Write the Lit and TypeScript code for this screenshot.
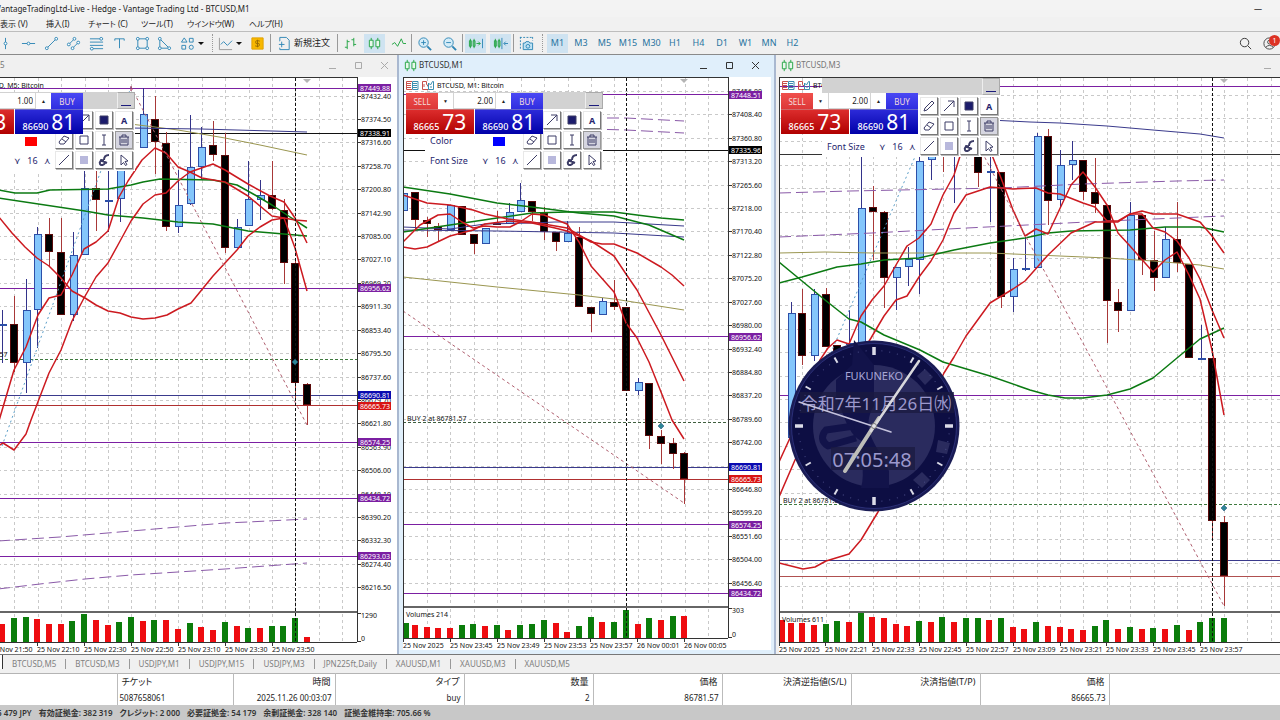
import { LitElement, html, css, svg, nothing } from "lit";
import { customElement, property } from "lit/decorators.js";

type Candle = [number, number, number, number, number, string];
type Line = { c: string; w?: number; d?: string; p: string };
type Tag = { y: number; t: string; c: string };
interface ChartData {
  ox: number;
  x0: number;
  x1: number;
  sep: number;
  base: number;
  gridX: number;
  gridY: number;
  rows: number;
  step?: number;
  first?: number;
  day: number;
  last: number;
  levels: [number, string, string?][];
  candles: Candle[];
  lines: Line[];
  vols: [number, number, string][];
  tags: Tag[];
  dates: [number, string][];
  scale?: [string, string];
  title: string;
  titleX: number;
  buy: [number, number, string];
  volumes?: string;
  mark: [number, number];
}

const RED = "#cc1a20";
const GREEN = "#0b7a12";
const PURPLE = "#7b1fa2";
const LILAC = "#8a5aa8";
const NAVY = "#3a3a8c";
const OLIVE = "#9a9650";

const M5: ChartData = {
  ox: 0, x0: -20, x1: 357, sep: 611, base: 642, gridX: 14.3, gridY: 95.5, rows: 22, step: 57.9, first: 87432.4,
  day: 295, last: 307,
  levels: [[88, PURPLE], [133, "#111"], [288, PURPLE], [359, "#3f7a3f", "3 2"], [395, NAVY], [405, "#b03030"], [442, PURPLE], [498, PURPLE], [556, PURPLE]],
  candles: [
    [2, 324, 325, 310, 363, "b"], [14, 324, 363, 296, 372, "k"], [26, 310, 363, 279, 393, "b"], [37, 234, 310, 227, 348, "b"],
    [49, 234, 252, 218, 266, "k"], [61, 252, 315, 218, 315, "k"], [73, 255, 315, 232, 321, "b"], [84, 188, 255, 160, 255, "b"],
    [96, 188, 200, 160, 231, "k"], [108, 200, 201, 165, 232, "b"], [120, 165, 199, 160, 222, "b"], [143, 114, 148, 88, 148, "b"],
    [155, 119, 142, 96, 174, "k"], [166, 143, 227, 132, 231, "k"], [178, 205, 227, 170, 233, "b"], [190, 167, 204, 115, 205, "b"],
    [201, 147, 167, 127, 180, "b"], [213, 145, 155, 121, 161, "k"], [225, 155, 248, 133, 253, "k"], [237, 227, 248, 219, 248, "b"],
    [248, 199, 226, 161, 226, "b"], [260, 195, 200, 180, 220, "b"], [272, 195, 209, 161, 210, "k"], [284, 210, 263, 199, 284, "k"],
    [295, 263, 383, 261, 399, "k"], [307, 384, 405, 383, 425, "k"],
  ],
  lines: [
    { c: OLIVE, w: 1, p: "130,124 155,127 178,130 225,138 260,145 307,155" },
    { c: NAVY, w: 1, p: "130,128 201,129 307,132" },
    { c: GREEN, p: "-2,190 15,193 37,193 50,190 108,189 131,185 143,182 160,179 213,180 237,185 255,195 272,205 287,215 307,228" },
    { c: GREEN, p: "-2,198 85,211 108,215 143,218 178,222 213,224 248,231 272,233 307,236" },
    { c: RED, p: "-2,216 12,233 25,247 37,258 49,266 60,277 72,291 85,298 96,305 108,311 120,313 131,317 143,319 155,318 167,315 178,309 191,303 213,276 225,263 237,250 248,236 260,227 272,220 284,218 295,220 307,221" },
    { c: RED, p: "-2,424 14,370 26,347 38,315 49,298 61,295 72,275 84,249 96,242 108,231 119,197 128,181 142,160 155,148 166,153 178,167 190,172 202,178 225,182 248,196 272,216 284,218 295,248 307,291" },
    { c: RED, p: "-2,446 3,443 14,450 26,434 31,420 49,373 61,350 72,321 84,298 96,277 108,263 119,243 131,221 143,204 155,195 166,193 178,181 190,172 213,164 225,170 248,184 270,196 284,202 295,218 307,243" },
    { c: LILAC, w: 1, d: "12 5", p: "-2,541 60,537 143,530 225,523 248,522 307,519" },
    { c: LILAC, w: 1, d: "12 5", p: "-2,589 40,584 85,579 131,575 225,569 307,563" },
    { c: "#b06070", w: 1, d: "3 3", p: "131,87 307,425" },
    { c: "#5a9ec8", w: 1, d: "2 3", p: "2,446 131,87" },
    { c: "#a02050", w: 1, p: "131,86 131,91" },
  ],
  vols: [[2, 624, "r"], [14, 618, "g"], [26, 617, "g"], [37, 619, "r"], [49, 624, "r"], [61, 624, "r"], [72, 621, "g"], [84, 614, "g"], [96, 620, "r"], [108, 625, "r"], [119, 622, "g"], [131, 617, "g"], [143, 621, "r"], [154, 620, "g"], [166, 620, "r"], [178, 629, "r"], [190, 623, "g"], [201, 627, "r"], [213, 630, "r"], [225, 622, "g"], [237, 626, "r"], [248, 628, "g"], [260, 628, "r"], [272, 626, "g"], [283, 626, "g"], [295, 618, "g"], [307, 637, "r"]],
  tags: [{ y: 88, t: "87449.88", c: PURPLE }, { y: 133, t: "87338.91", c: "#000" }, { y: 288, t: "86956.62", c: PURPLE }, { y: 395, t: "86690.81", c: "#0a0ab0" }, { y: 406, t: "86665.73", c: "#d81414" }, { y: 442, t: "86574.25", c: PURPLE }, { y: 498, t: "86434.72", c: PURPLE }, { y: 556, t: "86293.03", c: PURPLE }],
  dates: [[-10, "25 Nov 21:50"], [37, "25 Nov 22:10"], [84, "25 Nov 22:30"], [131, "25 Nov 22:50"], [178, "25 Nov 23:10"], [225, "25 Nov 23:30"], [272, "25 Nov 23:50"]],
  scale: ["1290", "0"], title: "BTCUSD, M5: Bitcoin", titleX: -23, buy: [-52, 357, "BUY 2 at 86781.57"], mark: [295, 362],
};

const M1: ChartData = {
  ox: 403, x0: 403, x1: 728, sep: 606, base: 638, gridX: 427, gridY: 90.9, rows: 22, step: 47.6, first: 87456,
  day: 626, last: 684,
  levels: [[94, PURPLE], [150, "#111"], [336, PURPLE], [422, "#3f5f3f", "3 2"], [467, NAVY], [479, "#b03030"], [524, PURPLE], [593, PURPLE]],
  candles: [
    [403, 193, 211, 193, 211, "b"], [415, 192, 220, 192, 229, "k"], [427, 220, 224, 217, 237, "k"], [438, 226, 230, 223, 241, "k"],
    [450, 205, 230, 205, 230, "b"], [462, 206, 235, 206, 235, "k"], [474, 234, 244, 234, 254, "k"], [485, 228, 244, 228, 244, "b"],
    [497, 223, 225, 211, 225, "k"], [509, 212, 224, 203, 224, "b"], [520, 200, 212, 183, 212, "b"], [532, 201, 212, 201, 221, "k"],
    [544, 213, 232, 207, 240, "k"], [556, 232, 242, 232, 251, "k"], [567, 233, 242, 221, 242, "b"], [579, 237, 307, 227, 307, "k"],
    [591, 307, 314, 307, 332, "k"], [602, 301, 315, 298, 315, "b"], [614, 302, 307, 280, 310, "k"], [626, 307, 391, 307, 391, "k"],
    [638, 382, 391, 378, 395, "b"], [649, 383, 436, 383, 449, "k"], [661, 436, 444, 430, 464, "k"], [673, 443, 454, 438, 469, "k"],
    [684, 453, 479, 452, 504, "k"],
  ],
  lines: [
    { c: OLIVE, w: 1, p: "403,277 497,287 579,295 614,299 684,310" },
    { c: NAVY, w: 1, p: "403,227 450,229 485,224 532,223 555,222 614,222 684,226" },
    { c: NAVY, w: 1, p: "403,230 497,231 614,233 684,237" },
    { c: GREEN, p: "403,187 450,194 497,203 532,207 579,213 614,216 649,225 684,240" },
    { c: GREEN, p: "403,232 450,225 497,218 532,213 567,212 614,212 637,215 661,218 684,220" },
    { c: RED, p: "403,195 427,203 450,205 473,210 485,214 508,219 532,222 567,228 591,242 602,244 614,244 637,253 661,267 672,275 684,286" },
    { c: RED, p: "403,242 420,225 438,215 450,214 462,222 473,228 485,226 497,227 510,227 520,222 532,214 544,215 567,224 579,242 591,266 614,292 626,323 637,338 649,362 661,392 672,420 684,439" },
    { c: RED, p: "403,247 415,249 427,247 450,236 473,230 485,224 508,221 532,223 555,228 567,231 591,241 614,256 626,274 637,290 661,335 684,381" },
    { c: LILAC, w: 1, d: "12 5", p: "590,118 626,118 684,121" },
    { c: LILAC, w: 1, d: "12 5", p: "590,129 626,130 684,133" },
    { c: "#b06070", w: 1, d: "3 3", p: "403,311 684,503" },
  ],
  vols: [[403, 623, "g"], [415, 625, "r"], [427, 627, "r"], [438, 628, "r"], [450, 628, "r"], [462, 625, "g"], [473, 624, "g"], [485, 626, "r"], [497, 625, "g"], [508, 630, "r"], [520, 625, "g"], [532, 624, "g"], [544, 620, "g"], [556, 623, "r"], [567, 632, "r"], [579, 626, "g"], [591, 617, "g"], [602, 622, "r"], [614, 622, "g"], [626, 610, "g"], [638, 624, "r"], [649, 618, "g"], [661, 620, "r"], [673, 616, "g"], [684, 616, "r"]],
  tags: [{ y: 95, t: "87448.51", c: PURPLE }, { y: 150, t: "87335.96", c: "#000" }, { y: 337, t: "86956.62", c: PURPLE }, { y: 467, t: "86690.81", c: "#0a0ab0" }, { y: 479, t: "86665.73", c: "#d81414" }, { y: 525, t: "86574.25", c: PURPLE }, { y: 593, t: "86434.72", c: PURPLE }],
  dates: [[403, "25 Nov 2025"], [450, "25 Nov 23:45"], [497, "25 Nov 23:49"], [544, "25 Nov 23:53"], [590, "25 Nov 23:57"], [637, "26 Nov 00:01"], [684, "26 Nov 00:05"]],
  scale: ["303", "0"], title: "BTCUSD, M1: Bitcoin", titleX: 437, buy: [407, 421, "BUY 2 at 86781.57"], volumes: "Volumes 214", mark: [661, 426],
};

const M3: ChartData = {
  ox: 779, x0: 779, x1: 4000, sep: 611, base: 642, gridX: 802.3, gridY: 94.5, rows: 22,
  day: 1212, last: 1224,
  levels: [[86, PURPLE], [154, "#333"], [395, PURPLE], [504, "#3f7a3f", "3 2"], [560, NAVY], [576, "#b05050"]],
  candles: [
    [791, 313, 438, 302, 438, "b"], [802, 313, 356, 289, 365, "k"], [814, 294, 356, 289, 361, "b"], [826, 294, 347, 288, 347, "k"],
    [837, 345, 385, 345, 385, "k"], [849, 343, 344, 310, 360, "b"], [861, 208, 400, 150, 400, "b"], [873, 207, 212, 186, 260, "k"],
    [884, 212, 278, 211, 308, "k"], [896, 267, 278, 267, 310, "b"], [908, 259, 267, 247, 286, "b"], [919, 161, 260, 150, 294, "b"],
    [931, 156, 160, 150, 180, "b"], [943, 150, 151, 150, 172, "k"], [954, 150, 151, 150, 203, "b"], [978, 150, 173, 150, 187, "k"],
    [990, 171, 173, 150, 222, "b"], [1001, 172, 297, 172, 308, "k"], [1013, 269, 297, 258, 312, "b"], [1025, 268, 269, 237, 271, "b"],
    [1037, 136, 268, 133, 268, "b"], [1048, 136, 201, 129, 225, "k"], [1060, 165, 200, 150, 208, "b"], [1072, 160, 165, 141, 180, "b"],
    [1083, 160, 192, 160, 200, "k"], [1095, 192, 204, 158, 213, "k"], [1107, 205, 301, 205, 343, "k"], [1118, 302, 311, 289, 332, "k"],
    [1130, 215, 311, 202, 311, "b"], [1142, 215, 260, 215, 275, "k"], [1154, 260, 278, 231, 291, "k"], [1165, 239, 278, 227, 278, "b"],
    [1177, 239, 263, 202, 272, "k"], [1189, 264, 358, 264, 358, "k"], [1201, 358, 359, 325, 359, "b"], [1212, 358, 521, 358, 538, "k"],
    [1224, 522, 576, 516, 606, "k"],
  ],
  lines: [
    { c: NAVY, w: 1, p: "990,120 1030,122 1060,123 1107,126 1153,130 1200,134 1224,138" },
    { c: LILAC, w: 1, d: "12 5", p: "779,193 850,191 1000,188 1083,184 1177,181 1224,180" },
    { c: LILAC, w: 1, d: "12 5", p: "779,237 872,233 967,228 1107,221 1177,218 1224,216" },
    { c: OLIVE, w: 1, p: "779,253 825,252 872,253 990,253 1060,256 1107,258 1153,261 1200,265 1224,269" },
    { c: GREEN, p: "779,283 802,277 837,267 861,264 884,260 919,258 954,250 990,243 1025,238 1048,233 1071,231 1130,230 1165,227 1200,227 1224,232" },
    { c: GREEN, p: "779,262 802,281 825,300 849,319 861,322 884,335 920,350 943,362 990,376 1030,390 1048,395 1065,398 1083,398 1107,395 1130,389 1153,378 1177,358 1200,339 1224,328" },
    { c: RED, p: "779,462 790,438 820,360 828,348 837,340 849,344 861,316 872,300 884,286 896,265 907,246 919,238 931,224 943,195 954,175 962,150 978,130 990,150 1001,178 1013,210 1025,236 1036,229 1048,234 1071,185 1083,172 1095,187 1107,205 1118,233 1130,246 1153,272 1165,260 1177,252 1189,275 1200,299 1212,350 1224,415" },
    { c: RED, p: "779,497 795,460 871,338 884,316 896,300 907,296 919,277 931,261 943,240 954,213 966,195 990,187 1013,189 1036,188 1048,193 1060,194 1083,203 1095,207 1107,221 1118,221 1130,214 1142,214 1153,228 1165,232 1177,241 1189,258 1200,279 1212,310 1224,338" },
    { c: RED, p: "779,563 803,569 815,567 826,561 849,554 861,540 878,512 944,373 954,357 966,336 990,303 1013,289 1025,281 1048,255 1071,233 1095,222 1118,222 1130,214 1142,211 1153,214 1177,214 1200,222 1212,236 1224,253" },
    { c: "#5a9ec8", w: 1, d: "2 3", p: "815,390 917,152" },
    { c: "#b06070", w: 1, d: "3 3", p: "982,152 1025,235 1224,606" },
  ],
  vols: [[779, 620, "r"], [791, 623, "r"], [802, 623, "r"], [814, 625, "r"], [826, 624, "g"], [837, 621, "g"], [849, 622, "r"], [861, 613, "g"], [872, 617, "r"], [884, 618, "r"], [896, 624, "r"], [907, 626, "r"], [919, 621, "g"], [931, 622, "r"], [942, 617, "g"], [954, 622, "r"], [966, 618, "g"], [978, 618, "g"], [989, 620, "r"], [1001, 618, "g"], [1013, 627, "r"], [1024, 629, "r"], [1036, 622, "g"], [1048, 626, "r"], [1060, 627, "r"], [1071, 629, "r"], [1083, 630, "r"], [1095, 626, "g"], [1106, 620, "g"], [1118, 629, "r"], [1130, 627, "g"], [1142, 629, "r"], [1153, 628, "g"], [1165, 629, "r"], [1177, 625, "g"], [1189, 630, "r"], [1200, 622, "g"], [1212, 618, "g"], [1224, 618, "g"]],
  tags: [],
  dates: [[779, "25 Nov 2025"], [825, "25 Nov 22:21"], [872, "25 Nov 22:33"], [919, "25 Nov 22:45"], [966, "25 Nov 22:57"], [1013, "25 Nov 23:09"], [1060, "25 Nov 23:21"], [1106, "25 Nov 23:33"], [1153, "25 Nov 23:45"], [1200, "25 Nov 23:57"]],
  title: "BTCUSD, M3: Bitcoin", titleX: 813, buy: [783, 503, "BUY 2 at 86781.57"], volumes: "Volumes 611", mark: [1224, 508],
};

const TOP = 77;

@customElement("price-chart")
class PriceChart extends LitElement {
  @property({ attribute: false }) data!: ChartData;

  static styles = css`
    :host { display: block; height: 100%; min-width: 0; background: #fff; overflow: hidden; }
    svg { display: block; width: 100%; height: 100%; }
    text { font: 7px "Noto Sans", sans-serif; fill: #111; }
    .tag { fill: #fff; }
    .crisp { shape-rendering: crispEdges; }
    .grid { stroke: #c9c9c9; stroke-dasharray: 3 3; }
    .frame { stroke: #333; }
    .curve { fill: none; stroke-linejoin: round; }
  `;

  private book(x: number) {
    return svg`<g transform="translate(${x} 81)" fill="none" stroke-width="1">
      <path d="M6 .5H.5v8H6M1 2.500h4M1 4.500h4M1 6.500h4" stroke="#c8524c"/><path d="M6.500 .5H12v8H6.500zM7 2.500h4M7 4.500h4M7 6.500h4" stroke="#3a8fb0"/>
      <path d="M16.500 .5h4v3l2 2v3h-6zM18 3v3" stroke="#c8524c"/><path d="M22.500 2l2 2 2-3.500h1v8h-5zM25 5v2" stroke="#3a8fb0"/></g>`;
  }

  render() {
    const d = this.data;
    const cols: number[] = [];
    for (let x = d.gridX; x < Math.min(d.x1, 2600); x += 23.43) cols.push(Math.round(x) + 0.5);
    const rows = Array.from({ length: d.rows }, (_, i) => Math.round(d.gridY + i * 23.42) + 0.5);
    return html`<svg role="img" aria-label=${d.title}>
      <g transform="translate(${-d.ox} ${-TOP})">
        <g class="crisp grid">
          ${cols.map((x) => svg`<path d="M${x} 78V${d.sep}M${x} ${d.sep + 3}V${d.base}"/>`)}
          ${rows.map((y) => svg`<path d="M${d.x0} ${y}H${d.x1}"/>`)}
        </g>
        <g class="crisp">
          ${d.levels.map(([y, c, dash]) => svg`<path d="M${d.x0} ${y + 0.5}H${d.x1}" stroke=${c} stroke-dasharray=${dash ?? nothing}/>`)}
          ${d.candles.map(([x, t, b, h, l, k]) => svg`
            <path d="M${x + 0.5} ${h}V${l}" stroke=${k === "b" ? "#33338a" : "#a83838"}/>
            <rect x=${x - 3.5 + (k === "b" ? 0.5 : 0)} y=${t + 0.5} width="7" height=${Math.max(b - t - 1, 0.5)}
              fill=${k === "b" ? "#84c6fb" : "#000"} stroke=${k === "b" ? "#2c4fa8" : "#5a0a0a"}/>`)}
          ${d.vols.map(([x, y, k]) => svg`<rect x=${Math.max(x - 3, d.x0)} y=${y} width="6" height=${d.base - y} fill=${k === "g" ? "#0b7d0b" : "#ee0c10"}/>`)}
        </g>
        ${d.lines.map((l) => svg`<polyline class="curve" points=${l.p} stroke=${l.c} stroke-width=${l.w ?? 1.5} stroke-dasharray=${l.d ?? nothing}/>`)}
        <path d="M${d.day + 0.5} 78V${d.base}" class="crisp" stroke="#111" stroke-dasharray="3 2"/>
        <path d="M${d.last - 4} 79h8l-4 4z" fill="#b4b4b4"/>
        <path d="M${d.mark[0]} ${d.mark[1] - 3}l3 3-3 3-3-3z" fill="#2e8696" stroke="#1e4a78" stroke-width=".5"/>
        <g class="crisp frame">
          <path d="M${d.x0} 77.500H${d.x1}M${d.x0} ${d.base + 0.5}H${d.x1}"/>
          <path d="M${d.x0} ${d.sep + 1}H${d.x1}" stroke="#666" stroke-width="2"/>
          <path d="M${d.x0 + 0.5} 77V${d.base}M${d.x1 + 0.5} 77V${d.base}"/>
          ${d.dates.map(([x]) => svg`<path d="M${x + 0.5} ${d.base}v4"/>`)}
          ${d.scale ? svg`<path d="M${d.x1} ${d.sep + 2.500}h4M${d.x1} ${d.base - 0.5}h4"/>` : nothing}
        </g>
        ${d.first ? rows.map((y, i) => svg`<path class="crisp frame" d="M${d.x1} ${y}h4"/><text x=${d.x1 + 4} y=${y + 2.500}>${(d.first! - i * d.step!).toFixed(2)}</text>`) : nothing}
        ${d.tags.map((t) => svg`<rect x=${d.x1 + 1} y=${t.y - 4} width="33" height="8" fill=${t.c}/><text class="tag" x=${d.x1 + 3} y=${t.y + 2.500}>${t.t}</text>`)}
        ${d.scale ? svg`<text x=${d.x1 + 4} y=${d.sep + 7}>${d.scale[0]}</text><text x=${d.x1 + 4} y=${d.base - 1}>${d.scale[1]}</text>` : nothing}
        ${d.dates.map(([x, t]) => svg`<text x=${x} y=${d.base + 10}>${t}</text>`)}
        <text x=${d.buy[0]} y=${d.buy[1]}>${d.buy[2]}</text>
        <text x=${d.titleX} y="88">${d.title}</text>
        ${d.ox ? this.book(d.titleX - 31) : nothing}
        ${d.volumes ? svg`<text x=${d.x0 + 3} y=${d.sep + 11}>${d.volumes}</text>` : nothing}
      </g>
    </svg>`;
  }
}

@customElement("trade-panel")
class TradePanel extends LitElement {
  @property() volume = "2.00";

  static styles = css`
    :host { display: grid; grid-template-columns: 68px 68px; gap: 0 1px; width: 137px; background: #fff; font: 9px "Noto Sans", sans-serif; }
    button { border: 0; margin: 0; padding: 0; color: #fff; font: inherit; }
    .top { grid-column: 1 / 3; display: flex; height: 16px; min-width: 0; }
    .side { flex: none; width: 32px; font-size: 8px; color: #f4dcdc; }
    .sell { background: linear-gradient(#f0504c, #dd3838); }
    .buy { background: linear-gradient(#4a48f4, #302ee0); }
    .spin { display: flex; flex: 1; min-width: 0; align-items: stretch; }
    .spin button { flex: none; width: 15px; background: #fff; color: #222; font-size: 5px; }
    input { flex: 1; width: 0; min-width: 0; margin: 0; border: 1px solid #d4d4d4; border-width: 0 1px 1px; padding: 0 2px; font: inherit; font-size: 8px; text-align: right; color: #222; background: #fff; }
    .quote { display: flex; align-items: baseline; justify-content: center; gap: 3px; height: 25px; line-height: 25px; font-size: 9px; font-weight: 500; border-top: 1px solid #ffffff66; }
    .quote b { font-size: 21px; font-weight: 400; }
    .sq { background: linear-gradient(#dc2c2c, #b00000); }
    .bq { background: linear-gradient(#2c2ad8, #0000a8); }
  `;

  render() {
    return html`
      <div class="top">
        <button class="side sell">SELL</button>
        <div class="spin"><button aria-label="Decrease volume">▼</button><input aria-label="Volume" .value=${this.volume} /><button aria-label="Increase volume">▲</button></div>
        <button class="side buy">BUY</button>
      </div>
      <button class="quote sq">86665<b>73</b></button>
      <button class="quote bq">86690<b>81</b></button>`;
  }
}

const TOOLS: [string, string][] = [
  ["Pencil", `<path d="M2 12l1-3 7-7 2 2-7 7z"/>`],
  ["Arrow", `<path d="M2 12L12 2M6 2h6v6"/>`],
  ["Filled box", `<path d="M3 3h8v8H3z" fill="#1c1c6c"/>`],
  ["Text", ""],
  ["Eraser", `<path d="M2 9l5-6 5 2-5 6H3z M5 6l4 3"/>`],
  ["Rectangle", `<path d="M3 3h8v8H3z"/>`],
  ["Vertical line", `<path d="M5 2h4M7 2v10M5 12h4"/>`],
  ["Delete", `<path d="M2 4h10M5 4V2h4v2M3 4v8h8V4M5 6v4M7 6v4M9 6v4"/>`],
  ["Line", `<path d="M2 12L12 2"/>`],
  ["Shade", `<path d="M3 3h8v8H3z" fill="#b8b8dc" stroke="none"/>`],
  ["Stamp", `<path d="M12 2c-3 0-5 2-5 5M3 7l7 3M7 7c-3 0-5 2-4 4s4 1 5-1" stroke-width="2"/>`],
  ["Pointer", `<path d="M4 2l7 6-3 .5 2 3-1.500 1-2-3L4 12z"/>`],
];

@customElement("draw-panel")
class DrawPanel extends LitElement {
  @property() colour = "blue";

  static styles = css`
    :host { display: block; width: 178px; background: #fff; font: 9px "Noto Sans", sans-serif; color: #26266e; }
    button { margin: 0; padding: 0; font: inherit; color: inherit; border: 0; background: none; }
    .bar { display: flex; justify-content: flex-end; height: 17px; background: #d2d2d2; }
    .bar button { display: grid; place-items: center; width: 18px; border: 1px solid #aaa; border-left-color: #eee; box-sizing: border-box; }
    .body { display: grid; grid-template-columns: 1fr 80px; padding-top: 2px; }
    .labels { display: grid; grid-template-rows: 20px 20px 20px; align-items: center; line-height: 12px; }
    .row { display: grid; grid-template-columns: 48px 1fr 16px 1fr; align-items: center; padding-left: 5px; text-align: center; }
    .row > :first-child { text-align: left; }
    .swatch { grid-column: 3; width: 12px; height: 9px; }
    .red { background: #f00; }
    .blue { background: #00f; }
    .tools { display: grid; grid-template-columns: repeat(4, 18px); gap: 2px; grid-auto-rows: 18px; }
    .tools button { display: grid; place-items: center; background: #fff; border: 1px solid #e8e8e8; border-right-color: #777; border-bottom-color: #777; font-weight: 700; box-shadow: 1px 1px 0 #bbb; }
    .tools .on { background: #d6d6e0; border-color: #999; }
    svg { width: 14px; height: 14px; fill: none; stroke: #3c3c66; }
  `;

  render() {
    return html`<div class="bar"><button aria-label="Minimise tools"><svg viewBox="0 0 14 14"><path d="M2 11.500h10" stroke="#1c1c7c"/></svg></button></div>
      <div class="body">
        <div class="labels">
          <span></span>
          <div class="row"><span>Color</span><button class="swatch ${this.colour}" aria-label="Colour"></button></div>
          <div class="row"><span>Font Size</span><button aria-label="Smaller">⋎</button><span>16</span><button aria-label="Larger">⋏</button></div>
        </div>
        <div class="tools">
          ${TOOLS.map(([n, p]) => html`<button class=${n === "Delete" ? "on" : ""} aria-label=${n}>${p ? html`<svg viewBox="0 0 14 14" .innerHTML=${p}></svg>` : "A"}</button>`)}
        </div>
      </div>`;
  }
}

@customElement("desk-clock")
class DeskClock extends LitElement {
  static styles = css`
    :host { display: block; width: 172px; height: 172px; }
    svg { display: block; width: 100%; height: 100%; }
    text { font-family: "Noto Sans", "Noto Sans CJK JP", sans-serif; fill: #9b98cc; text-anchor: middle; }
    .name { font-size: 11px; fill: #a9a7d6; }
    .date { font-size: 17px; }
    .time { font-size: 20px; }
  `;

  render() {
    const ticks = Array.from({ length: 60 }, (_, i) => i);
    return html`<svg viewBox="-86 -86 172 172" role="img" aria-label="FUKUNEKO">
      <circle r="85.500" fill="#1a1c55"/><circle r="82.500" fill="#0d0e43" stroke="#2b2f78"/>
      <circle r="61" fill="#2a2b5e"/>
      <path d="M-38-46L-22-61-20-86 0-61V-20C-10-5-5 10 5 25L15 45 15 62-13 62C-8 45-15 30-12 15-25 10-30-10-38-30z" fill="#12134a"/>
      <path d="M-20 0L-48 4q-8 9 2 16L-18 12" fill="none" stroke="#12134a" stroke-width="7" stroke-linejoin="round"/>
      <g fill="#2a2b5e"><path d="M43-50l8-7 8 8-8 8zM64 14l12 3-3 11-11-2zM48 46l8 8-8 8-9-8z"/></g>
      <g fill="#1b1b40" opacity=".75"><path d="M-74-34H80v21H-74zM-43 21H41v23H-43z"/></g>
      ${ticks.map((i) => svg`<path d="M0-${i % 5 ? 76 : 79}V-${i % 15 === 0 ? 71 : i % 5 ? 75 : 73}" transform="rotate(${i * 6})" stroke=${i % 5 ? "#4a4d88" : "#dcdce8"} stroke-width=${i % 15 === 0 ? 3.5 : i % 5 ? 1 : 2}/>`)}
      <text class="name" y="-46">FUKUNEKO</text>
      <text class="date" x="2" y="-16">令和7年11月26日㈬</text>
      <text class="time" x="-2" y="41">07:05:48</text>
      <g stroke-linecap="round">
        <path d="M5-8L-29 45" stroke="#bdbdb8" stroke-width="4"/><path d="M-3 5L45-65" stroke="#d8d8dc" stroke-width="2.500"/>
        <path d="M-75-24L17 6" stroke="#c4c2dc" stroke-width="1.500"/>
      </g>
      <circle r="2.500" fill="#e4e4e8" stroke="#777"/>
    </svg>`;
  }
}

const B = "#2f86b5";
const G = "#22a443";
const dots = (pts: number[][], c = B) => pts.map(([x, y]) => `<circle cx="${x}" cy="${y}" r="1.500" fill="#fff" stroke="${c}"/>`).join("");
const CANDLES = `<g stroke="${G}"><path d="M4.500 2v12M11.500 2v12"/><path d="M2.500 4.500h4v7h-4zM9.500 4.500h4v7h-4z" fill="#e8f8ec"/></g>`;
const ICONS: Record<string, string> = {
  vline: `<path d="M8 2v12"/>${dots([[8, 8]])}`,
  hline: `<path d="M1 8h14"/>${dots([[8, 8]])}`,
  trend: `<path d="M3 13L13 3"/>${dots([[3, 13], [13, 3]])}`,
  channel: `<path d="M2 10l7-7M6 14l8-8"/>${dots([[3, 9], [9, 3], [7, 13], [13, 7]])}`,
  fibo: `<path d="M1 3h14M1 6.500h14M1 10h14M1 13.500h14"/>${dots([[3, 13.5], [13, 3]])}`,
  text: `<path d="M3 5V3h10v2M8 3v10"/>`,
  rect: `<path d="M3 3h10v10H3z"/>${dots([[3, 3], [13, 3], [3, 13], [13, 13]])}`,
  tri: `<path d="M3 3v10h10z"/>${dots([[3, 3], [3, 13], [13, 13]])}`,
  shapes: `<path d="M4.500 2l3 4.500h-6zM10 2.500h4v4h-4zM2 10h4v4H2z"/><circle cx="12" cy="12" r="2.200"/>`,
  indi: `<path d="M1.500 2v12.500H15" stroke="#999"/><path d="M3 9l3-3 4 4 5-5"/>`,
  dollar: `<path d="M2 2h12v12H2z" fill="#f8b800" stroke="#e0a000"/><path d="M10.500 5.500q-4.500-1.500-4.500 1T8 8t2 1.500-4.500 1M8 4v8" stroke="#9a6c00"/>`,
  order: `<path d="M3 1.500h7l3 3v10H3z" stroke-linejoin="round"/><circle cx="5" cy="9" r="4" fill="#f0f0f0" stroke="none"/><path d="M2 9h6M5 6v6"/>`,
  bars: `<path d="M4.500 4v10M2 12h2.500M4.500 6H7M11.500 2v9M9 4h2.500M11.500 9H14" stroke="${G}"/>`,
  candles: CANDLES,
  line: `<path d="M1 9l3-2 3 4 4-8 2 5h3" stroke="${G}"/>`,
  zin: `<circle cx="7" cy="7" r="5" fill="#d4ecf8"/><path d="M11 11l4 4" stroke-width="2"/><path d="M4.500 7h5M7 4.500v5"/>`,
  zout: `<circle cx="7" cy="7" r="5" fill="#d4ecf8"/><path d="M11 11l4 4" stroke-width="2"/><path d="M4.500 7h5"/>`,
  scroll: `<path d="M2.500 3v10M6.500 3v10M1.500 5h2v6h-2zM5.500 5h2v6h-2z" stroke="${G}"/><path d="M9 8h4M11 6l2 2-2 2" stroke="${G}"/><path d="M15.500 3v10"/>`,
  shift: `<path d="M2.500 3v10M6.500 3v10M1.500 5h2v6h-2zM5.500 5h2v6h-2z" stroke="${G}"/><path d="M9.500 2v12M16 8h-4M13.500 6l-2 2 2 2"/>`,
  camera: `<path d="M1 1.500h14M1.500 1v13M14.500 1v4" stroke-dasharray="2 1.500"/><path d="M4.500 7.500h2l1-1.500h3l1 1.500h3v7h-10z" fill="#bfe2f4"/><circle cx="9.500" cy="11" r="2"/>`,
  search: `<g stroke="#333"><circle cx="7" cy="7" r="4.500"/><path d="M10.500 10.500L14 14"/></g>`,
  user: `<g stroke="#444"><circle cx="8" cy="8" r="6"/><circle cx="8" cy="6.500" r="2"/><path d="M4 12q4-4 8 0"/></g>`,
};
const icon = (n: string) => html`<svg class="ic" viewBox="0 0 16 16" fill="none" stroke=${B} .innerHTML=${ICONS[n]}></svg>`;
const tool = (n: string, cls = "") => html`<button class="tb ${cls}" aria-label=${n}>${icon(n)}</button>`;

@customElement("app-root")
class AppRoot extends LitElement {
  static styles = css`
    :host { display: flex; flex-direction: column; height: 100vh; overflow: hidden; background: #f0f0f0; color: #222; font: 8px/12px "Noto Sans", "Noto Sans CJK JP", sans-serif; }
    button { margin: 0; padding: 0; border: 0; background: none; font: inherit; color: inherit; }
    .title { display: flex; justify-content: space-between; align-items: center; height: 17px; padding-right: 18px; background: #f3f3f3; white-space: nowrap; }
    .title h1 { margin: 0 0 0 -4px; font: inherit; }
    .menu { display: grid; grid-template-columns: 46px 42px 53px 46px 62px auto; justify-content: start; height: 14px; border-bottom: 1px solid #bdbdbd; font-feature-settings: "palt"; white-space: nowrap; background: #f1f1f1; }
    .menu button { text-align: left; line-height: 14px; }
    .bar { display: flex; align-items: center; height: 22px; border-bottom: 1px solid #8a8a8a; font-size: 9px; }
    .grp { display: flex; align-items: center; justify-content: space-between; height: 18px; padding: 0 2px; border-right: 1px solid #999; box-sizing: border-box; }
    .dotted { border-right-style: dotted; }
    .g1 { width: 218px; margin-left: -5px; padding: 0 5px 0 0; }
    .g2 { width: 58px; }
    .g3 { width: 67px; }
    .g4 { width: 74px; }
    .g5 { width: 51px; }
    .g7 { width: 29px; }
    .tf { width: 256px; margin-left: 4px; padding: 0; border: 0; color: #2874a0; }
    .tb { display: flex; align-items: center; justify-content: center; width: 21px; height: 19px; }
    .wide { width: 30px; gap: 3px; justify-content: flex-start; padding-left: 3px; }
    .order { display: flex; align-items: center; gap: 2px; white-space: nowrap; padding-left: 4px; }
    .caret { border: 3px solid transparent; border-top-color: #111; border-bottom: 0; }
    .on { background: #cfe3f1; }
    .ic { width: 15px; height: 15px; flex: none; }
    .end { display: flex; margin-left: auto; gap: 3px; }
    .acct { position: relative; }
    .badge { position: absolute; right: 0; top: 1px; width: 11px; height: 11px; border-radius: 50%; background: #dc3224; color: #fff; font-size: 7px; line-height: 11px; }
    .mdi { display: grid; grid-template-columns: 397px 375px 1fr; gap: 2px; flex: 1; min-height: 0; background: #a9b8d0; border-bottom: 1px solid #777; }
    .win { display: flex; flex-direction: column; min-width: 0; min-height: 0; background: #f0f0f0; color: #777; overflow: hidden; }
    .win header { display: flex; align-items: center; gap: 1px; height: 22px; flex: none; padding: 0 5px 2px 4px; box-sizing: border-box; }
    .win h2 { margin: 0; font: inherit; }
    .win.active { background: #e0effb; color: #333; }
    .active .stage { margin: 0 3px 4px 4px; }
    .third .stage { margin-left: 3px; }
    .ctl { display: flex; gap: 14px; margin-left: auto; color: #aaa; padding-right: 2px; }
    .active .ctl { color: #333; padding-right: 8px; }
    .ctl svg { display: block; width: 12px; height: 12px; fill: none; stroke: currentColor; }
    .win.first header { padding-left: 0; }
    .stage { position: relative; flex: 1; min-height: 0; }
    .trade, .draw, .clock { position: absolute; }
    .first .trade { left: -54px; top: 16px; }
    .first .draw { left: -43px; top: 15px; }
    .active .trade { left: 3px; top: 16px; }
    .active .draw { left: 22px; top: 15px; }
    .third .trade { left: 2px; top: 16px; }
    .third .draw { left: 43px; top: 1px; }
    .clock { left: 9px; top: 263px; }
    .tabs { display: flex; align-items: center; height: 18px; color: #808080; background: #f0f0f0; white-space: nowrap; }
    .tabs .cur { width: 3px; height: 14px; align-self: flex-start; background: #fff; border-right: 1px solid #333; box-sizing: border-box; }
    .tabs button { padding: 0 9px; border-right: 1px solid #999; line-height: 10px; }
    .tabs button:last-child { border: 0; }
    table { width: 100%; table-layout: fixed; border-collapse: collapse; background: #fff; border-top: 1px solid #b4b4b4; }
    th, td { padding: 0 3px 0 2px; box-sizing: border-box; border-right: 1px solid #bbb; text-align: right; font-weight: 400; white-space: nowrap; }
    th { height: 17px; font-size: 9px; font-feature-settings: "palt"; padding: 0 4px; }
    td { height: 15px; padding-top: 1px; }
    .l { text-align: left; }
    th:last-child, td:last-child { border: 0; }
    .c1 { width: 117px; } .c2 { width: 116px; } .c3 { width: 102px; } .c4 { width: 129px; }
    footer { height: 15px; line-height: 15px; background: #c8c8c8; font-weight: 600; color: #333; white-space: nowrap; overflow: hidden; }
    footer p { display: flex; gap: 7px; margin: 0 0 0 -3px; font-feature-settings: "palt"; }
  `;

  private controls(only = false) {
    return html`<div class="ctl">
      <button aria-label="Minimise"><svg viewBox="0 0 12 12"><path d="M3 9.500h7"/></svg></button>
      ${only ? nothing : html`<button aria-label="Maximise"><svg viewBox="0 0 12 12"><path d="M3.500 3.500h6v6h-6z"/></svg></button>
      <button aria-label="Close"><svg viewBox="0 0 12 12"><path d="M3 3l7 7M10 3l-7 7"/></svg></button>`}
    </div>`;
  }

  render() {
    return html`
      <div class="title"><h1>VantageTradingLtd-Live - Hedge - Vantage Trading Ltd - BTCUSD,M1</h1><button aria-label="Minimise window">—</button></div>
      <nav class="menu">${["表示 (V)", "挿入(I)", "チャート (C)", "ツール(T)", "ウインドウ(W)", "ヘルプ(H)"].map((t) => html`<button>${t}</button>`)}</nav>
      <div class="bar">
        <div class="grp dotted g1">${["vline", "hline", "trend", "channel", "fibo", "text", "rect", "tri"].map((n) => tool(n))}
          <button class="tb wide" aria-label="Shapes">${icon("shapes")}<i class="caret"></i></button></div>
        <div class="grp g2"><button class="tb wide" aria-label="Indicators">${icon("indi")}<i class="caret"></i></button>${tool("dollar")}</div>
        <div class="grp g3"><button class="order">${icon("order")}新規注文</button></div>
        <div class="grp g4">${tool("bars")}${tool("candles", "on")}${tool("line")}</div>
        <div class="grp g5">${tool("zin")}${tool("zout")}</div>
        <div class="grp g5">${tool("scroll", "on")}${tool("shift", "on")}</div>
        <div class="grp dotted g7">${tool("camera")}</div>
        <div class="grp tf">${["M1", "M3", "M5", "M15", "M30", "H1", "H4", "D1", "W1", "MN", "H2"].map((t, i) => html`<button class="tb ${i ? "" : "on"}">${t}</button>`)}</div>
        <div class="end">${tool("search")}<button class="tb acct" aria-label="Account">${icon("user")}<span class="badge">1</span></button></div>
      </div>
      <main class="mdi">
        <section class="win first">
          <header><h2>5</h2>${this.controls()}</header>
          <div class="stage"><price-chart .data=${M5}></price-chart><draw-panel class="draw" colour="red"></draw-panel><trade-panel class="trade" volume="1.00"></trade-panel></div>
        </section>
        <section class="win active">
          <header>${icon("candles")}<h2>BTCUSD,M1</h2>${this.controls()}</header>
          <div class="stage"><price-chart .data=${M1}></price-chart><draw-panel class="draw"></draw-panel><trade-panel class="trade"></trade-panel></div>
        </section>
        <section class="win third">
          <header>${icon("candles")}<h2>BTCUSD,M3</h2>${this.controls(true)}</header>
          <div class="stage"><price-chart .data=${M3}></price-chart><draw-panel class="draw"></draw-panel><trade-panel class="trade"></trade-panel><desk-clock class="clock"></desk-clock></div>
        </section>
      </main>
      <nav class="tabs"><span class="cur"></span>${["BTCUSD,M5", "BTCUSD,M3", "USDJPY,M1", "USDJPY,M15", "USDJPY,M3", "JPN225ft,Daily", "XAUUSD,M1", "XAUUSD,M3", "XAUUSD,M5"].map((t) => html`<button>${t}</button>`)}</nav>
      <table>
        <colgroup><col class="c1" /><col class="c2" /><col class="c3" /><col class="c4" /><col class="c4" /><col class="c4" /><col class="c4" /><col class="c4" /><col class="c4" /><col /></colgroup>
        <thead><tr><th></th><th class="l">チケット</th><th>時間</th><th>タイプ</th><th>数量</th><th>価格</th><th>決済逆指値(S/L)</th><th>決済指値(T/P)</th><th>価格</th><th></th></tr></thead>
        <tbody><tr><td></td><td class="l">5087658061</td><td>2025.11.26 00:03:07</td><td>buy</td><td>2</td><td>86781.57</td><td></td><td></td><td>86665.73</td><td></td></tr></tbody>
      </table>
      <footer><p><span>6 479 JPY</span><span>有効証拠金: 382 319</span><span>クレジット: 2 000</span><span>必要証拠金: 54 179</span><span>余剰証拠金: 328 140</span><span>証拠金維持率: 705.66 %</span></p></footer>`;
  }
}
